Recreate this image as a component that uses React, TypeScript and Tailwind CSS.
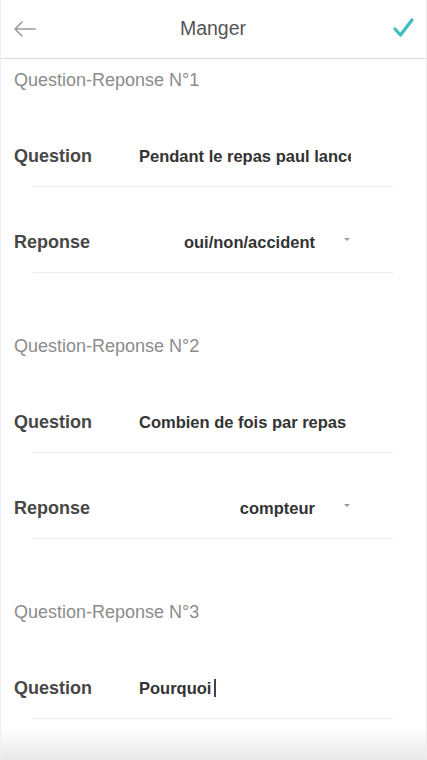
import { type ReactNode } from 'react'

type Row = {
  label: string
  value: string
  select?: boolean
  cursor?: boolean
}

type Section = {
  title: string
  rows: Row[]
}

const sections: Section[] = [
  {
    title: 'Question-Reponse N°1',
    rows: [
      { label: 'Question', value: 'Pendant le repas paul lance' },
      { label: 'Reponse', value: 'oui/non/accident', select: true },
    ],
  },
  {
    title: 'Question-Reponse N°2',
    rows: [
      { label: 'Question', value: 'Combien de fois par repas ?' },
      { label: 'Reponse', value: 'compteur', select: true },
    ],
  },
  {
    title: 'Question-Reponse N°3',
    rows: [{ label: 'Question', value: 'Pourquoi', cursor: true }],
  },
]

function FieldRow({ row }: { row: Row }) {
  return (
    <div className="flex h-[86px] flex-col">
      <div className="flex h-[66px] items-end">
        <div className="flex h-[22px] w-full items-center">
          <span className="w-[138px] shrink-0 pl-[13px] text-[18px] font-bold text-[#474747]">{row.label}</span>
          {row.select ? (
            <>
              <div className="flex w-[176px] justify-end whitespace-nowrap">
                <span className="text-[16.5px] font-bold text-[#333]">{row.value}</span>
              </div>
              <span className="ml-[29px] mt-[-6px] h-0 w-0 border-x-[3.5px] border-t-[3px] border-x-transparent border-t-[#9a9a9a]" />
            </>
          ) : (
            <div className="flex w-[212px] items-center overflow-hidden whitespace-nowrap">
              <span className="text-[16.5px] font-bold text-[#333]">{row.value}</span>
              {row.cursor ? <span className="ml-[3px] h-[18px] w-[1.5px] bg-[#444]" /> : null}
            </div>
          )}
        </div>
      </div>
      <div className="mt-auto ml-8 mr-[33px] h-px bg-[#ececec]" />
    </div>
  )
}

function SectionBlock({ section, first, children }: { section: Section; first: boolean; children: ReactNode }) {
  return (
    <section className={first ? '' : 'pt-[52px]'}>
      <div className="flex h-[42px] items-center pl-[13px] text-[18px] text-[#8c8c8c]">{section.title}</div>
      {children}
    </section>
  )
}

export default function App() {
  return (
    <div
      className="relative flex h-[760px] w-[427px] flex-col overflow-hidden border-x border-[#eeeeee] bg-white"
      style={{ fontFamily: '"Liberation Sans", Arial, sans-serif' }}
    >
      <header className="flex h-[59px] shrink-0 items-center justify-between border-b border-[#dcdcdc] px-3">
        <svg width="24" height="18" viewBox="0 0 24 18" fill="none" stroke="#9a9a9a" strokeWidth="1.6" strokeLinecap="round" strokeLinejoin="round">
          <path d="M22 9H2M9 2L2 9l7 7" />
        </svg>
        <span className="pr-[2px] text-[19.5px] text-[#555]">Manger</span>
        <svg width="24" height="22" viewBox="0 0 24 22" fill="none" stroke="#3dbdbc" strokeWidth="3.2" strokeLinecap="round" strokeLinejoin="round" className="mb-[2px] mr-[-1px]">
          <path d="M4 12l5.5 6L21 3" />
        </svg>
      </header>

      <main className="flex-1">
        {sections.map((section, i) => (
          <SectionBlock key={section.title} section={section} first={i === 0}>
            {section.rows.map((row) => (
              <FieldRow key={row.label} row={row} />
            ))}
          </SectionBlock>
        ))}
      </main>

      <div className="absolute inset-x-0 bottom-0 h-[34px] bg-gradient-to-b from-white to-[#e9e9e9]" />
    </div>
  )
}
